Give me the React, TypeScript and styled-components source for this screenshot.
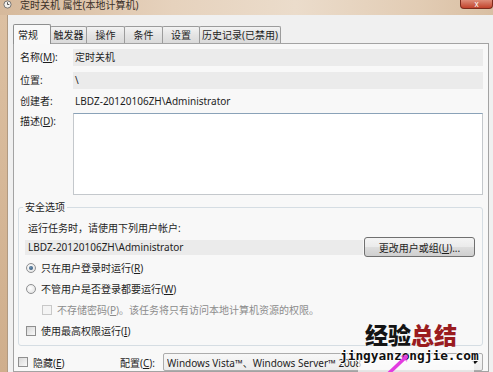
import styled, { createGlobalStyle } from "styled-components";

const GlobalStyle = createGlobalStyle`
  html, body {
    margin: 0;
    padding: 0;
    width: 493px;
    height: 372px;
    overflow: hidden;
  }
  body {
    font-family: "Noto Sans", "Noto Sans CJK SC", sans-serif;
    font-size: 10px;
    color: #1e1e1e;
  }
`;

const Page = styled.div`
  position: relative;
  width: 493px;
  height: 372px;
  overflow: hidden;
  display: flex;
  flex-direction: column;
`;

const TitleBar = styled.div`
  height: 15px;
  flex-shrink: 0;
  display: flex;
  align-items: flex-start;
  background: linear-gradient(90deg, #d6b99b 0%, #e6d2bd 35%, #ebdccb 60%, #e2ccb4 85%, #d9bfa3 100%);
`;

const TitleIcon = styled.svg`
  width: 9px;
  height: 9px;
  margin: 0 8px 0 3px;
  flex-shrink: 0;
`;

const TitleText = styled.span`
  line-height: 10px;
  font-size: 10px;
  color: #3a3028;
  white-space: nowrap;
`;

const CloseButton = styled.div`
  margin-left: auto;
  width: 31px;
  height: 8px;
  border: 1px solid #7d2b1d;
  border-top: none;
  border-radius: 0 0 4px 4px;
  background: linear-gradient(#dd8c78, #c2432c);
  color: #fff;
  font-size: 8px;
  line-height: 7px;
  text-align: center;
`;

const Frame = styled.div`
  flex: 1;
  display: flex;
  min-height: 0;
`;

const LeftEdge = styled.div`
  width: 7px;
  border-right: 1px solid #b09a82;
  background: linear-gradient(#dcc0a2, #cfae8c);
`;

const Client = styled.div`
  flex: 1;
  display: flex;
  flex-direction: column;
  padding: 9px 4px 0 5px;
  background: #f0f0f0;
  min-width: 0;
`;

const TabStrip = styled.div`
  height: 19px;
  display: flex;
  align-items: flex-end;
`;

const Tab = styled.div<{ $w: number; $active?: boolean }>`
  position: relative;
  box-sizing: border-box;
  width: ${(p) => p.$w}px;
  height: ${(p) => (p.$active ? 20 : 17)}px;
  margin-bottom: ${(p) => (p.$active ? -1 : 0)}px;
  margin-left: -1px;
  z-index: ${(p) => (p.$active ? 2 : 1)};
  border: 1px solid ${(p) => (p.$active ? "#8e8f8f" : "#9c9c9c")};
  border-bottom: none;
  border-radius: 2px 2px 0 0;
  background: ${(p) =>
    p.$active ? "#f9f9f9" : "linear-gradient(#f3f3f3, #e4e4e4 50%, #dadada)"};
  display: flex;
  align-items: center;
  justify-content: ${(p) => (p.$active ? "flex-start" : "center")};
  padding-left: ${(p) => (p.$active ? 4 : 0)}px;
  white-space: nowrap;
  line-height: 14px;

  &:first-child {
    margin-left: 0;
  }
`;

const Panel = styled.div`
  flex: 1;
  border: 1px solid #a3a3a3;
  background: #f8f8f8;
  padding: 5px 5px 0 4px;
  min-height: 0;
`;

const TopGrid = styled.div`
  display: grid;
  grid-template-columns: 53px 1fr;
  grid-template-rows: 23px 21px 20px 82px;
  margin-left: 2px;
`;

const Label = styled.div`
  line-height: 17px;
  white-space: nowrap;
`;

const ReadField = styled.div<{ $plain?: boolean }>`
  height: 17px;
  line-height: 17px;
  padding-left: 2px;
  background: ${(p) => (p.$plain ? "transparent" : "#ebebeb")};
  white-space: nowrap;
  overflow: hidden;
`;

const DescBox = styled.div`
  box-sizing: border-box;
  height: 82px;
  border: 1px solid #c4c8cc;
  border-top-color: #8aa2b8;
  background: #fff;
`;

const Group = styled.fieldset`
  margin: 6px 0 0 0;
  padding: 0 7px 4px 6px;
  border: 1px solid #d5dde3;
  border-radius: 3px;
  min-width: 0;
`;

const Legend = styled.legend`
  padding: 0 2px;
  margin-left: -2px;
  line-height: 12px;
`;

const Intro = styled.div`
  margin-top: 6px;
  line-height: 18px;
  padding-left: 3px;
`;

const AccountRow = styled.div`
  height: 20px;
  display: flex;
  align-items: center;
  gap: 1px;
`;

const AccountField = styled.div`
  flex: 1;
  height: 15px;
  line-height: 15px;
  padding-left: 3px;
  background: #ebebeb;
  white-space: nowrap;
`;

const Button = styled.button`
  box-sizing: border-box;
  width: 111px;
  height: 20px;
  padding: 0;
  border: 1px solid #707070;
  border-radius: 3px;
  background: linear-gradient(#f4f4f4 0%, #ebebeb 48%, #dddddd 52%, #cfcfcf 100%);
  font: inherit;
  color: #1e1e1e;
  white-space: nowrap;
`;

const Option = styled.div<{ $indent?: number; $disabled?: boolean }>`
  height: 21px;
  display: flex;
  align-items: center;
  gap: 5px;
  margin-left: ${(p) => p.$indent ?? 1}px;
  color: ${(p) => (p.$disabled ? "#8c8c8c" : "#1e1e1e")};
  white-space: nowrap;
`;

const Radio = styled.span<{ $checked?: boolean }>`
  position: relative;
  box-sizing: border-box;
  width: 10px;
  height: 10px;
  flex-shrink: 0;
  border-radius: 50%;
  border: 1px solid #8f9092;
  background: radial-gradient(circle at 40% 40%, #ffffff, #dcdcdc);

  &::after {
    content: "";
    display: ${(p) => (p.$checked ? "block" : "none")};
    position: absolute;
    left: 2px;
    top: 2px;
    width: 4px;
    height: 4px;
    border-radius: 50%;
    background: radial-gradient(circle at 40% 40%, #6a8fb0, #274a6c);
  }
`;

const Check = styled.span<{ $disabled?: boolean }>`
  box-sizing: border-box;
  width: 10px;
  height: 10px;
  flex-shrink: 0;
  border: 1px solid ${(p) => (p.$disabled ? "#c8c8c8" : "#8f8f8f")};
  background: ${(p) =>
    p.$disabled ? "#f4f4f4" : "linear-gradient(135deg, #d8d8d8, #f9f9f9)"};
`;

const BottomRow = styled.div`
  margin-top: 7px;
  height: 18px;
  display: flex;
  align-items: center;
`;

const HideOption = styled.div`
  width: 102px;
  display: flex;
  align-items: center;
  gap: 5px;
  white-space: nowrap;
`;

const ConfigLabel = styled.div`
  width: 43px;
  white-space: nowrap;
`;

const Select = styled.div`
  flex: 1;
  box-sizing: border-box;
  height: 18px;
  display: flex;
  align-items: center;
  padding: 0 4px 0 3px;
  border: 1px solid #acacac;
  border-radius: 2px;
  background: linear-gradient(#f7f7f7, #ececec);
  white-space: nowrap;
  overflow: hidden;
`;

const SelectText = styled.span`
  flex: 1;
  overflow: hidden;
`;

const Arrow = styled.span`
  width: 0;
  height: 0;
  border-left: 3px solid transparent;
  border-right: 3px solid transparent;
  border-top: 3px solid #111;
`;

const Watermark = styled.div`
  position: absolute;
  left: 340px;
  top: 320px;
  pointer-events: none;
  white-space: nowrap;
`;

const Brand = styled.div`
  padding-left: 25px;
  font-family: "Noto Sans CJK SC", sans-serif;
  font-size: 23px;
  font-weight: 900;
  line-height: 28px;
  color: #141414;
`;

const BrandRed = styled.span`
  color: #9a1c1f;
`;

const Domain = styled.div`
  font-family: "DejaVu Sans Mono", monospace;
  font-weight: bold;
  font-size: 12.8px;
  line-height: 16px;
  color: #111;
  text-shadow: 1px 0 0 #fff, -1px 0 0 #fff, 0 1px 0 #fff, 0 -1px 0 #fff;
`;

const Glare = styled.div`
  position: absolute;
  left: 358px;
  top: 356px;
  width: 116px;
  height: 16px;
  background: rgba(255, 255, 255, 0.7);
`;

const Pointer = styled.svg`
  position: absolute;
  left: 386px;
  top: 352px;
  width: 28px;
  height: 22px;
`;

const U = styled.u`
  text-decoration-thickness: 1px;
  text-underline-offset: 1px;
`;

const tabs = [
  { label: "常规", w: 38, active: true },
  { label: "触发器", w: 37 },
  { label: "操作", w: 39 },
  { label: "条件", w: 39 },
  { label: "设置", w: 38 },
  { label: "历史记录(已禁用)", w: 82 },
];

export default function App() {
  return (
    <>
      <GlobalStyle />
      <Page>
        <TitleBar>
          <TitleIcon viewBox="0 0 10 10">
            <circle cx="5" cy="5" r="4" fill="#f4f1ec" stroke="#6b6b6b" strokeWidth="1" />
            <path d="M5 2.5V5h2" stroke="#444" strokeWidth="1" fill="none" />
          </TitleIcon>
          <TitleText>定时关机 属性(本地计算机)</TitleText>
          <CloseButton>x</CloseButton>
        </TitleBar>
        <Frame>
          <LeftEdge />
          <Client>
            <TabStrip>
              {tabs.map((t) => (
                <Tab key={t.label} $w={t.w} $active={t.active}>
                  {t.label}
                </Tab>
              ))}
            </TabStrip>
            <Panel>
              <TopGrid>
                <Label>
                  名称(<U>M</U>):
                </Label>
                <ReadField>定时关机</ReadField>
                <Label>位置:</Label>
                <ReadField>\</ReadField>
                <Label>创建者:</Label>
                <ReadField $plain>LBDZ-20120106ZH\Administrator</ReadField>
                <Label>
                  描述(<U>D</U>):
                </Label>
                <DescBox />
              </TopGrid>

              <Group>
                <Legend>安全选项</Legend>
                <Intro>运行任务时，请使用下列用户帐户:</Intro>
                <AccountRow>
                  <AccountField>LBDZ-20120106ZH\Administrator</AccountField>
                  <Button>
                    更改用户或组(<U>U</U>)...
                  </Button>
                </AccountRow>
                <Option>
                  <Radio $checked />
                  <span>
                    只在用户登录时运行(<U>R</U>)
                  </span>
                </Option>
                <Option>
                  <Radio />
                  <span>
                    不管用户是否登录都要运行(<U>W</U>)
                  </span>
                </Option>
                <Option $indent={17} $disabled>
                  <Check $disabled />
                  <span>
                    不存储密码(<U>P</U>)。该任务将只有访问本地计算机资源的权限。
                  </span>
                </Option>
                <Option>
                  <Check />
                  <span>
                    使用最高权限运行(<U>I</U>)
                  </span>
                </Option>
              </Group>

              <BottomRow>
                <HideOption>
                  <Check />
                  <span>
                    隐藏(<U>E</U>)
                  </span>
                </HideOption>
                <ConfigLabel>
                  配置(<U>C</U>):
                </ConfigLabel>
                <Select>
                  <SelectText>Windows Vista™、Windows Server™ 2008</SelectText>
                  <Arrow />
                </Select>
              </BottomRow>
            </Panel>
          </Client>
        </Frame>

        <Glare />
        <Watermark>
          <Brand>
            经验<BrandRed>总结</BrandRed>
          </Brand>
          <Domain>{"jingyanzongjie.\u2060com"}</Domain>
        </Watermark>
        <Pointer viewBox="0 0 28 22">
          <path d="M3 21 L20 5" stroke="#e23ce0" strokeWidth="3.5" strokeLinecap="round" />
          <path d="M14 4 L22 2 L21 10 Z" fill="#e23ce0" opacity="0.6" />
        </Pointer>
      </Page>
    </>
  );
}
